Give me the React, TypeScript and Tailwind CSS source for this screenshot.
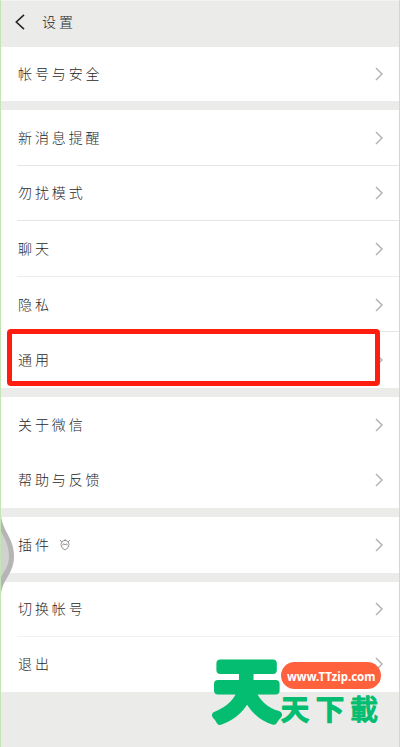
import clsx from "clsx";

type Item = {
  label: string;
  divider?: string;
  badge?: boolean;
  highlighted?: boolean;
};

const groups: { items: Item[]; className: string }[] = [
  { className: "h-[54px]", items: [{ label: "帐号与安全" }] },
  {
    className: "h-[278px]",
    items: [
      { label: "新消息提醒", divider: "bg-[#e5e5e5]" },
      { label: "勿扰模式", divider: "bg-[#e5e5e5]" },
      { label: "聊天", divider: "bg-[#ececec]" },
      { label: "隐私", divider: "bg-[#e5e5e5]" },
      { label: "通用", highlighted: true },
    ],
  },
  { className: "h-[111px]", items: [{ label: "关于微信" }, { label: "帮助与反馈" }] },
  { className: "h-[55.5px]", items: [{ label: "插件", badge: true }] },
  { className: "h-[110px]", items: [{ label: "切换帐号", divider: "bg-[#f2f2f2]" }, { label: "退出" }] },
];

const Chevron = () => (
  <svg className="h-[14px] w-2" viewBox="0 0 8 14" fill="none" stroke="#b4b4b4" strokeWidth="1.5">
    <path d="M1 1l6 6-6 6" />
  </svg>
);

const PluginBadge = () => (
  <svg className="ml-[7px] h-3 w-3" viewBox="0 0 12 12" fill="none" stroke="#777" strokeWidth="0.8">
    <path d="M6 1.3Q9.7 1.5 10.1 5.5 9.8 9.3 6 11 2.2 9.3 1.9 5.5 2.3 1.5 6 1.3Z" />
    <path d="M2.8 2.8L1 1.2M9.2 2.8L11 1.2M6 1.3V.2M3.9 6.4V5.3l1-.4 1.1.9 1.1-.9 1 .4v1.1" />
  </svg>
);

const SettingRow = ({ label, divider, badge, highlighted }: Item) => (
  <div className="relative flex min-h-0 flex-1 items-center pl-[17px] pr-4">
    <span className="mb-0.5 text-[14px] leading-5 font-light tracking-[2.9px] text-[#282828]">{label}</span>
    {badge && <PluginBadge />}
    <span className="ml-auto">
      <Chevron />
    </span>
    {divider && <span className={clsx("absolute right-0 bottom-0 left-4 h-px", divider)} />}
    {highlighted && (
      <span className="absolute -top-[3px] right-[19px] bottom-[2px] left-[6px] z-10 rounded-[4px] border-5 border-[#ff1d10]" />
    )}
  </div>
);

const Watermark = () => (
  <svg
    className="absolute top-[630px] left-[200px] h-[117px] w-[199px]"
    viewBox="200 630 199 117"
    fontFamily="'Noto Sans CJK SC', sans-serif"
    fill="#05bd70"
    stroke="#05bd70"
    strokeLinejoin="round"
    strokeLinecap="round"
  >
    <text x="213.8" y="714.8" fontSize="66" fontWeight="500" strokeWidth="8">天</text>
    <text x="281" y="720" fontSize="28" fontWeight="500" strokeWidth="1.8">天</text>
    <text x="316" y="720" fontSize="28" fontWeight="500" strokeWidth="1.8">下</text>
    <text x="350" y="720" fontSize="28" fontWeight="500" strokeWidth="1" fontFamily="'Noto Sans CJK TC', sans-serif">載</text>
    <rect x="281" y="662" width="100" height="27" rx="13.5" fill="#ff613d" stroke="none" />
    <text
      x="287"
      y="681"
      fontSize="13"
      fontWeight="700"
      fill="#fff"
      stroke="none"
      fontFamily="'Noto Sans', sans-serif"
      textLength="88.5"
      lengthAdjust="spacingAndGlyphs"
    >
      www.TTzip.com
    </text>
  </svg>
);

const FloatingHandle = () => (
  <svg className="absolute top-[516px] left-0 h-20 w-[15px]" viewBox="0 0 15 80">
    <path d="M1 0C3 16 14 22 14 40S3 62 1 78Z" fill="#b5b5b5" />
    <path d="M1 15C4 22 9 29 9 40S4 55 1 61Z" fill="#cfd2cd" />
  </svg>
);

export default function App() {
  return (
    <div className="relative flex h-[747px] w-[400px] flex-col overflow-hidden border-x border-[#c5e4b4] bg-[#ebebea] font-['Noto_Sans_CJK_SC',sans-serif]">
      <header className="flex h-[47px] shrink-0 items-center border-t border-[#f3f3f3] pb-1 pl-[14px]">
        <svg className="h-4 w-[10px]" viewBox="0 0 10 16" fill="none" stroke="#262626" strokeWidth="1.6">
          <path d="M9 .8L1.3 8 9 15.2" />
        </svg>
        <h1 className="mb-0.5 ml-[17px] text-[14px] leading-5 font-light tracking-[2.9px] text-[#282828]">设置</h1>
      </header>
      <main className="flex flex-col gap-[9px]">
        {groups.map((group) => (
          <section key={group.items[0].label} className={clsx("flex flex-col bg-white", group.className)}>
            {group.items.map((item) => (
              <SettingRow key={item.label} {...item} />
            ))}
          </section>
        ))}
      </main>
      <div className="absolute inset-y-0 -left-px w-[400px]">
        <FloatingHandle />
        <Watermark />
      </div>
    </div>
  );
}
